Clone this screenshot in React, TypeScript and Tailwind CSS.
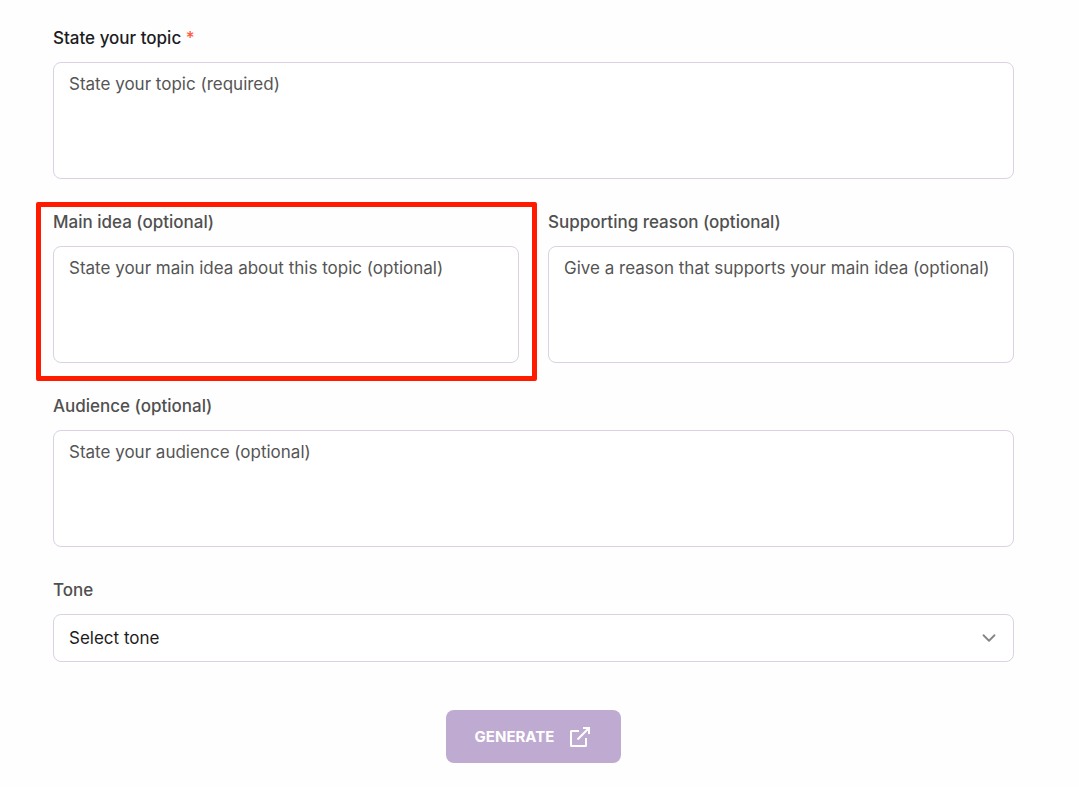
import { ChevronDown } from "lucide-react";

type FieldProps = {
  id: string;
  label: string;
  placeholder: string;
  required?: boolean;
};

const Field = ({ id, label, placeholder, required }: FieldProps) => (
  <div className="flex flex-col gap-[11px]">
    <label
      htmlFor={id}
      className={`text-[17px] leading-[25px] font-medium ${required ? "text-[#1c1c1e]" : "text-[#505050]"}`}
    >
      {label}
      {required && <span className="text-[#ff5a45]"> *</span>}
    </label>
    <textarea
      id={id}
      required={required}
      placeholder={placeholder}
      className="block h-[117px] w-full resize-none rounded-lg border border-[#ddd0e2] bg-white px-[15px] py-[9px] text-[17px] leading-[25px] text-[#1c1c1e] placeholder:text-[#555555] focus:outline-none focus:border-[#8e6bb0]"
    />
  </div>
);

export default function App() {
  return (
    <main className="min-h-screen bg-[#fefefe] pt-[26px] pr-[65px] pb-6 pl-[53px] font-['Inter',sans-serif]">
      <form className="flex flex-col gap-[31px]" onSubmit={(e) => e.preventDefault()}>
        <Field id="topic" label="State your topic" placeholder="State your topic (required)" required />

        <div className="grid grid-cols-2 gap-[29px]">
          <div className="relative">
            <Field
              id="main-idea"
              label="Main idea (optional)"
              placeholder="State your main idea about this topic (optional)"
            />
            {/* highlight frame */}
            <div className="pointer-events-none absolute -top-2 -right-[18px] -bottom-[18px] -left-[17px] rounded-xs border-5 border-[#ff1a00]" />
          </div>
          <Field
            id="reason"
            label="Supporting reason (optional)"
            placeholder="Give a reason that supports your main idea (optional)"
          />
        </div>

        <Field id="audience" label="Audience (optional)" placeholder="State your audience (optional)" />

        <div className="flex flex-col gap-[11px]">
          <label htmlFor="tone" className="text-[17px] leading-[25px] font-medium text-[#505050]">
            Tone
          </label>
          <div className="relative">
            <select
              id="tone"
              className="block h-12 w-full appearance-none rounded-lg border border-[#ddd0e2] bg-white px-[15px] pt-0.5 text-[17px] text-[#1c1c1e] focus:outline-none focus:border-[#8e6bb0]"
            >
              <option>Select tone</option>
            </select>
            <ChevronDown
              className="pointer-events-none absolute top-[13px] right-[14px] h-[22px] w-[22px] text-[#858585]"
              strokeWidth={2}
            />
          </div>
        </div>

        <button
          type="submit"
          className="mt-[17px] flex h-[53px] items-center gap-[15px] self-center rounded-lg bg-[#bfabd1] pr-[30px] pl-[29px] text-[15px] leading-6 font-bold text-white"
        >
          GENERATE
          <svg
            className="h-[22px] w-[22px]"
            viewBox="0 0 22 22"
            fill="none"
            stroke="currentColor"
            strokeWidth="2"
            aria-hidden="true"
          >
            <path d="M10 5H2.500Q2 5 2 5.500V19.500Q2 20 2.500 20H16.500Q17 20 17 19.500V12" />
            <path d="M14 2H20V8M19.500 2.500L8.500 13.500" />
          </svg>
        </button>
      </form>
    </main>
  );
}
